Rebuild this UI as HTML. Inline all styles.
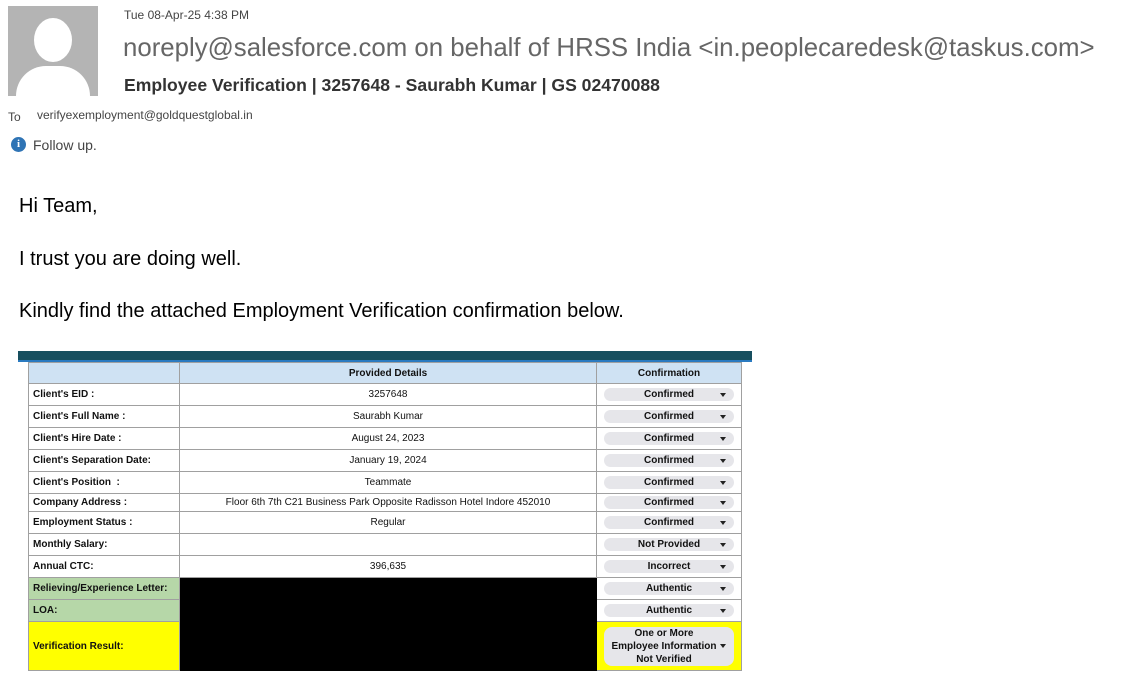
<!DOCTYPE html>
<html><head><meta charset="utf-8"><style>
body{margin:0;width:1127px;height:687px;background:#fff;position:relative;overflow:hidden;font-family:"Liberation Sans",sans-serif}
.a{position:absolute}
.hdr{font-family:"Liberation Sans",sans-serif}
.c{position:absolute;border-right:1px solid #a0a0a0;border-bottom:1px solid #a0a0a0;box-sizing:border-box;font-size:10px;display:flex;align-items:center;color:#111}
.l{left:28px;width:152px;font-weight:bold;padding-left:4px;border-left:1px solid #a0a0a0}
.m{left:180px;width:417px;justify-content:center}
.r{left:597px;width:145px;justify-content:center}
.pill{width:130px;height:13px;background:#e6e6ea;border-radius:7px;font-weight:bold;font-size:10px;display:flex;align-items:center;justify-content:center;position:relative}
.pill:after{content:"";position:absolute;right:8px;top:50%;margin-top:-2px;border-left:3px solid transparent;border-right:3px solid transparent;border-top:4px solid #222}
</style></head><body>
<div class="a" style="left:8px;top:6px;width:90px;height:90px;background:#b4b4b4;overflow:hidden">
<div class="a" style="left:26px;top:12px;width:38px;height:44px;border-radius:50%;background:#fff"></div>
<div class="a" style="left:8px;top:60px;width:74px;height:40px;border-radius:30px 30px 0 0;background:#fff"></div>
</div>
<div class="a hdr" style="left:124px;top:8px;font-size:12px;color:#444">Tue 08-Apr-25 4:38 PM</div>
<div class="a hdr" style="left:123px;top:34px;font-size:25.8px;color:#666;white-space:nowrap">noreply@salesforce.com on behalf of HRSS India &lt;in.peoplecaredesk@taskus.com&gt;</div>
<div class="a hdr" style="left:124px;top:75px;font-size:17.6px;font-weight:bold;color:#333;white-space:nowrap">Employee Verification | 3257648 - Saurabh Kumar | GS 02470088</div>
<div class="a hdr" style="left:8px;top:110px;font-size:12px;color:#444">To</div>
<div class="a hdr" style="left:37px;top:108px;font-size:12px;color:#444">verifyexemployment@goldquestglobal.in</div>
<div class="a" style="left:11px;top:137px;width:15px;height:15px;border-radius:50%;background:#2f74b5;color:#fff;font-weight:bold;font-size:11px;text-align:center;line-height:15px;font-family:'Liberation Serif',serif">i</div>
<div class="a hdr" style="left:33px;top:137px;font-size:14px;color:#444">Follow up.</div>
<div class="a" style="left:19px;top:195px;font-size:20px;color:#000">Hi Team,</div>
<div class="a" style="left:19px;top:248px;font-size:20px;color:#000">I trust you are doing well.</div>
<div class="a" style="left:19px;top:300px;font-size:20px;color:#000">Kindly find the attached Employment Verification confirmation below.</div>

<div class="a" style="left:18px;top:351px;width:734px;height:9px;background:#174f5f;border-bottom:2px solid #2a7ac0"></div>
<div class="c l" style="top:362px;height:22px;background:#cfe2f3;border-top:1px solid #a0a0a0"></div>
<div class="c m" style="top:362px;height:22px;background:#cfe2f3;font-weight:bold;border-top:1px solid #a0a0a0">Provided Details</div>
<div class="c r" style="top:362px;height:22px;background:#cfe2f3;font-weight:bold;border-top:1px solid #a0a0a0">Confirmation</div>

<div class="c l" style="top:384px;height:22px">Client's EID :</div><div class="c m" style="top:384px;height:22px">3257648</div><div class="c r" style="top:384px;height:22px"><div class="pill">Confirmed</div></div>
<div class="c l" style="top:406px;height:22px">Client's Full Name :</div><div class="c m" style="top:406px;height:22px">Saurabh Kumar</div><div class="c r" style="top:406px;height:22px"><div class="pill">Confirmed</div></div>
<div class="c l" style="top:428px;height:22px">Client's Hire Date :</div><div class="c m" style="top:428px;height:22px">August 24, 2023</div><div class="c r" style="top:428px;height:22px"><div class="pill">Confirmed</div></div>
<div class="c l" style="top:450px;height:22px">Client's Separation Date:</div><div class="c m" style="top:450px;height:22px">January 19, 2024</div><div class="c r" style="top:450px;height:22px"><div class="pill">Confirmed</div></div>
<div class="c l" style="top:472px;height:22px">Client's Position &nbsp;:</div><div class="c m" style="top:472px;height:22px">Teammate</div><div class="c r" style="top:472px;height:22px"><div class="pill">Confirmed</div></div>
<div class="c l" style="top:494px;height:18px">Company Address :</div><div class="c m" style="top:494px;height:18px">Floor 6th 7th C21 Business Park Opposite Radisson Hotel Indore 452010</div><div class="c r" style="top:494px;height:18px"><div class="pill">Confirmed</div></div>
<div class="c l" style="top:512px;height:22px">Employment Status :</div><div class="c m" style="top:512px;height:22px">Regular</div><div class="c r" style="top:512px;height:22px"><div class="pill">Confirmed</div></div>
<div class="c l" style="top:534px;height:22px">Monthly Salary:</div><div class="c m" style="top:534px;height:22px"></div><div class="c r" style="top:534px;height:22px"><div class="pill">Not Provided</div></div>
<div class="c l" style="top:556px;height:22px">Annual CTC:</div><div class="c m" style="top:556px;height:22px">396,635</div><div class="c r" style="top:556px;height:22px"><div class="pill">Incorrect</div></div>
<div class="c l" style="top:578px;height:22px;background:#b6d7a8">Relieving/Experience Letter:</div><div class="c r" style="top:578px;height:22px"><div class="pill">Authentic</div></div>
<div class="c l" style="top:600px;height:22px;background:#b6d7a8">LOA:</div><div class="c r" style="top:600px;height:22px"><div class="pill">Authentic</div></div>
<div class="c l" style="top:622px;height:49px;background:#ffff00">Verification Result:</div>
<div class="a" style="left:180px;top:578px;width:417px;height:93px;background:#000"></div>
<div class="c r" style="top:622px;height:49px;background:#ffff00"><div class="pill" style="height:39px;border-radius:8px;line-height:13px;text-align:center;flex-direction:column;padding-right:10px;box-sizing:border-box">One or More<br>Employee Information<br>Not Verified</div></div>
</body></html>
